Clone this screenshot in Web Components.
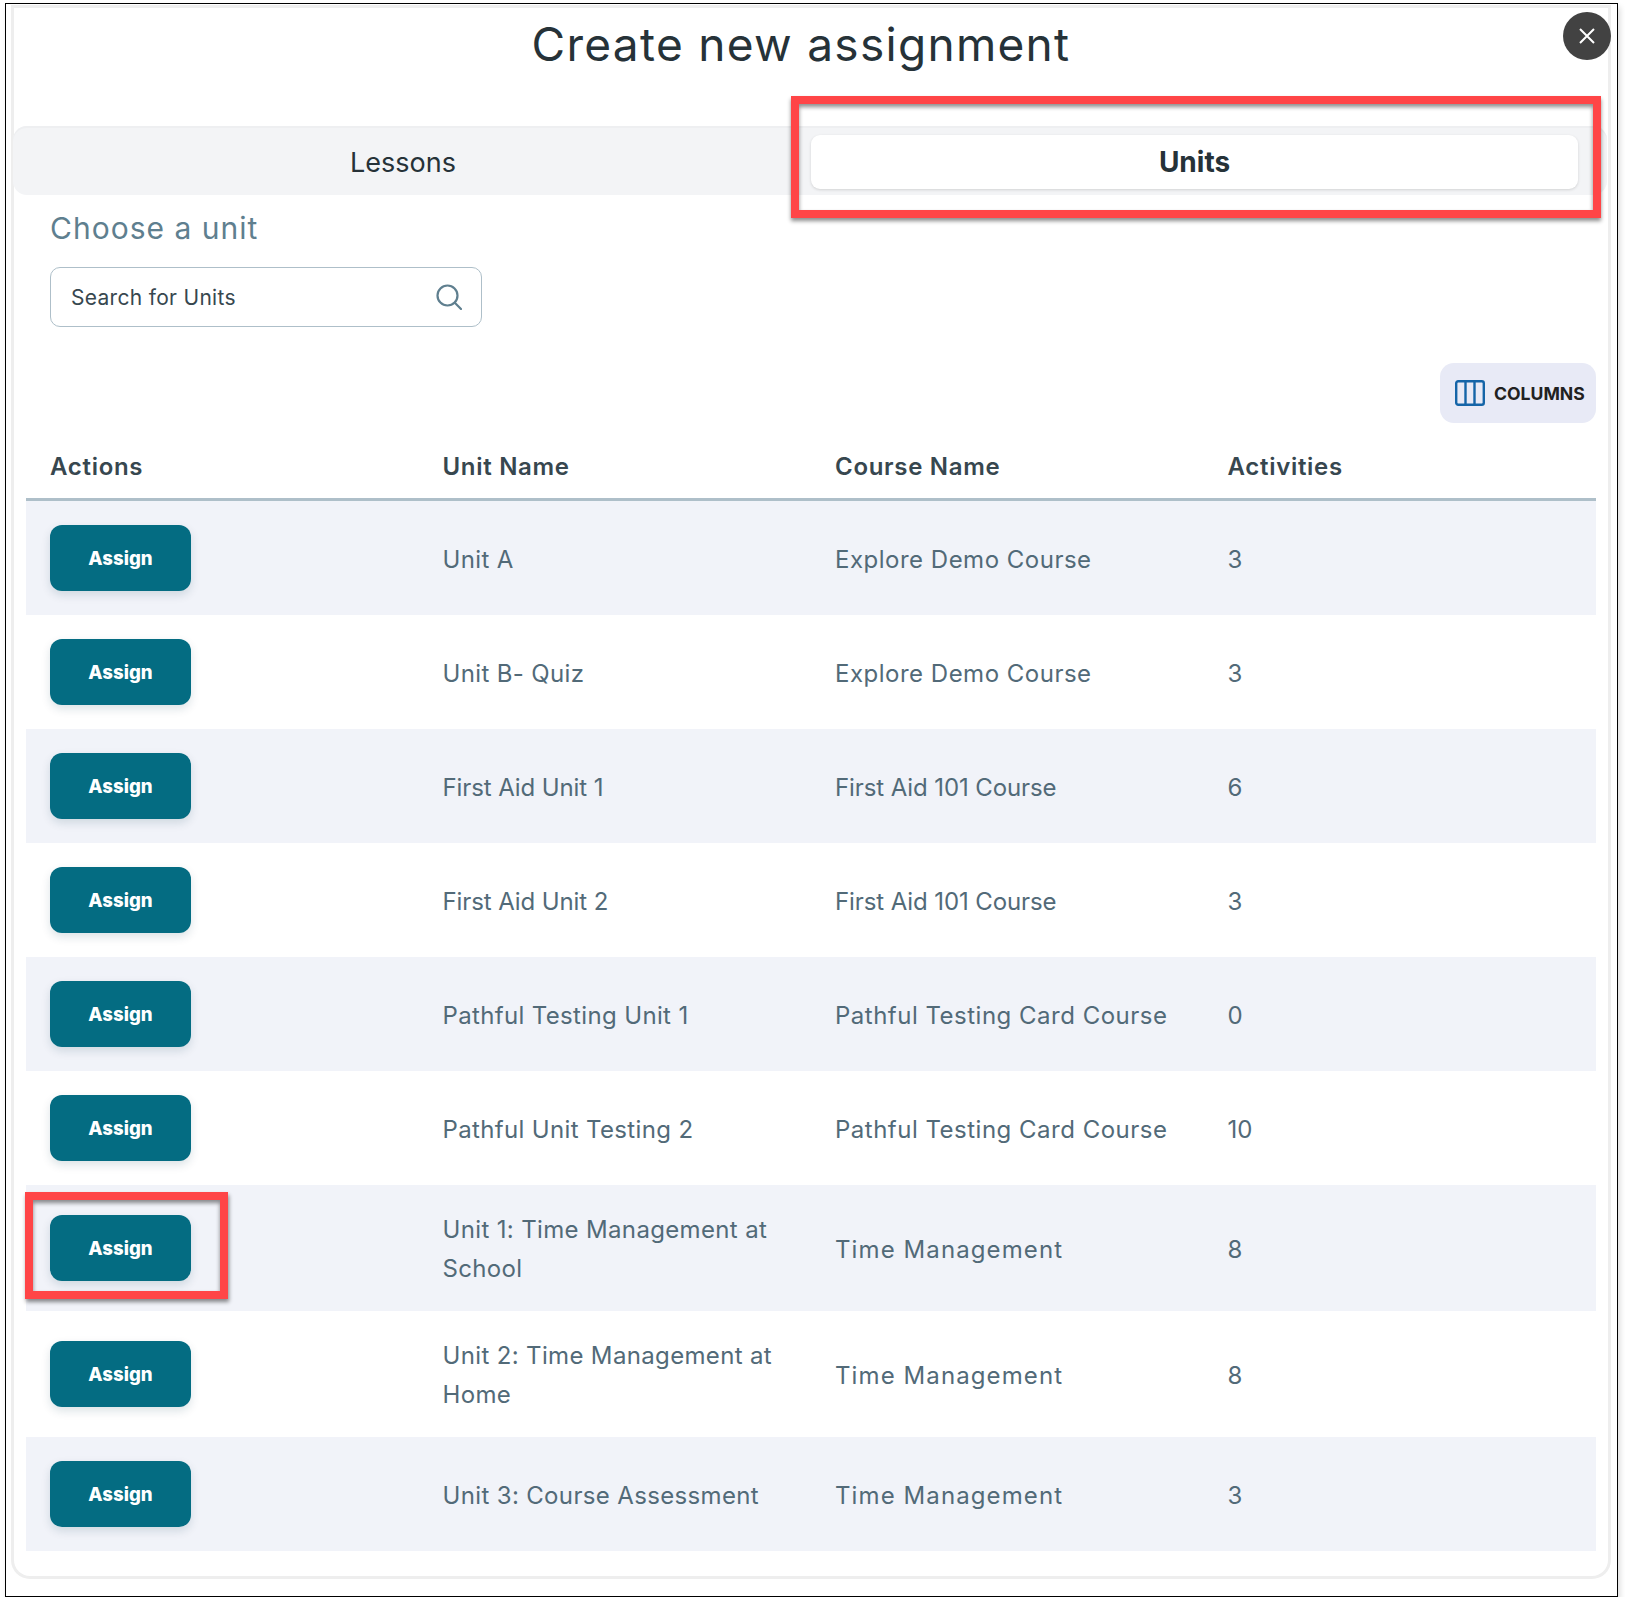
<!DOCTYPE html>
<html>
<head>
<meta charset="utf-8">
<title>Create new assignment</title>
<style>
	html, body { margin: 0; background: #fff; }
	body { font-family: Inter, "Open Sans", sans-serif; color: #263238; }
	.first-aid { --unit-track: -0.1px; --course-track: -0.1px; }
	.time-mgmt { --course-track: 1.1px; }
</style>
</head>
<body>
<assign-modal>
	<span slot="title">Create new assignment</span>
	<modal-tabs slot="tabs"></modal-tabs>
	<span slot="subtitle">Choose a unit</span>
	<search-box slot="search" placeholder="Search for Units"></search-box>
	<columns-button slot="tools"></columns-button>
	<unit-table slot="table">
		<unit-row unit="Unit A" course="Explore Demo Course" count="3"></unit-row>
		<unit-row unit="Unit B- Quiz" course="Explore Demo Course" count="3"></unit-row>
		<unit-row class="first-aid" unit="First Aid Unit 1" course="First Aid 101 Course" count="6"></unit-row>
		<unit-row class="first-aid" unit="First Aid Unit 2" course="First Aid 101 Course" count="3"></unit-row>
		<unit-row unit="Pathful Testing Unit 1" course="Pathful Testing Card Course" count="0"></unit-row>
		<unit-row unit="Pathful Unit Testing 2" course="Pathful Testing Card Course" count="10"></unit-row>
		<unit-row class="time-mgmt" unit="Unit 1: Time Management at School" course="Time Management" count="8" marked></unit-row>
		<unit-row class="time-mgmt" unit="Unit 2: Time Management at Home" course="Time Management" count="8"></unit-row>
		<unit-row class="time-mgmt" unit="Unit 3: Course Assessment" course="Time Management" count="3"></unit-row>
	</unit-table>
</assign-modal>

<script>
class AssignModal extends HTMLElement {
	constructor() {
		super();
		this.attachShadow({ mode: "open" });
		this.shadowRoot.innerHTML = `
			<style>
				:host {
					display: block;
					box-sizing: border-box;
					width: 1613px;
					height: 1594px;
					margin: 3px 0 0 5px;
					padding: 4px 9px 0 8px;
					border: 1px solid #000;
					box-shadow: 2px 4px 6px rgba(0, 0, 0, 0.14);
				}
				.modal {
					position: relative;
					box-sizing: border-box;
					height: 1568px;
					border-radius: 0 0 16px 16px;
					background: #fff;
					box-shadow: 0 0 0 3px #eeeeee;
				}
				h1 {
					height: 118px;
					margin: 0;
					padding-right: 20px;
					box-sizing: border-box;
					font-size: 46px;
					line-height: 72px;
					font-weight: 400;
					letter-spacing: 1.3px;
					text-align: center;
					color: #263238;
				}
				.close {
					position: absolute;
					top: 4px;
					right: -3px;
					display: flex;
					align-items: center;
					justify-content: center;
					width: 48px;
					height: 48px;
					border-radius: 50%;
					background: #424242;
				}
				.tabs { display: block; margin-left: -1px; }
				h2 {
					height: 72px;
					margin: 0;
					padding-left: 36px;
					box-sizing: border-box;
					font-size: 30px;
					line-height: 66px;
					font-weight: 400;
					letter-spacing: 1px;
					color: #5f7f8f;
				}
				.search { padding-left: 36px; }
				.tools {
					display: flex;
					justify-content: flex-end;
					margin-top: 36px;
					padding-right: 12px;
				}
				.table { padding: 0 12px; }
			</style>
			<div class="modal">
				<h1><slot name="title"></slot></h1>
				<div class="close">
					<svg width="16" height="16" viewBox="0 0 16 16"><path d="M1 1L15 15M15 1L1 15" stroke="#fff" stroke-width="2" fill="none"/></svg>
				</div>
				<div class="tabs"><slot name="tabs"></slot></div>
				<h2><slot name="subtitle"></slot></h2>
				<div class="search"><slot name="search"></slot></div>
				<div class="tools"><slot name="tools"></slot></div>
				<div class="table"><slot name="table"></slot></div>
			</div>
		`;
	}
}

class ModalTabs extends HTMLElement {
	constructor() {
		super();
		this.attachShadow({ mode: "open" });
		this.shadowRoot.innerHTML = `
			<style>
				:host {
					display: grid;
					grid-template-columns: 1fr 767px;
					box-sizing: border-box;
					width: 1594px;
					height: 69px;
					padding: 9px 29px 6px 0;
					border-radius: 14px;
					background: #f3f4f6;
					box-shadow: inset 0 2px 0 #eeeff1;
				}
				.tab {
					display: flex;
					align-items: center;
					justify-content: center;
					padding-right: 18px;
					font-size: 27px;
					color: #263238;
				}
				.tab.on {
					position: relative;
					padding-right: 0;
					border-radius: 9px;
					background: #fff;
					font-size: 28px;
					font-weight: 700;
					box-shadow: 0 1px 3px rgba(0, 0, 0, 0.14);
				}
				.mark {
					position: absolute;
					top: -39px;
					bottom: -29px;
					left: -20px;
					right: -23px;
					border: 8px solid #ff4547;
					box-shadow: 0 3px 4px rgba(0, 0, 0, 0.45), inset 0 3px 4px rgba(0, 0, 0, 0.45);
				}
			</style>
			<div class="tab">Lessons</div>
			<div class="tab on">Units<div class="mark"></div></div>
		`;
	}
}

class SearchBox extends HTMLElement {
	constructor() {
		super();
		this.attachShadow({ mode: "open" });
	}

	connectedCallback() {
		this.shadowRoot.innerHTML = `
			<style>
				:host {
					display: flex;
					align-items: center;
					justify-content: space-between;
					box-sizing: border-box;
					width: 432px;
					height: 60px;
					padding: 0 19px 0 20px;
					border: 1px solid #aebfc9;
					border-radius: 10px;
					font-size: 21px;
					letter-spacing: 0.3px;
					color: #37474f;
				}
			</style>
			<span>${this.getAttribute("placeholder")}</span>
			<svg width="26" height="26" viewBox="0 0 26 26" fill="none" stroke="#5f7f8f" stroke-width="2.2">
				<circle cx="11.5" cy="11.5" r="10"/>
				<path d="M18.8 18.8L25 25" stroke-linecap="round"/>
			</svg>
		`;
	}
}

class ColumnsButton extends HTMLElement {
	constructor() {
		super();
		this.attachShadow({ mode: "open" });
		this.shadowRoot.innerHTML = `
			<style>
				:host {
					display: inline-flex;
					align-items: center;
					box-sizing: border-box;
					width: 156px;
					height: 60px;
					padding-left: 15px;
					gap: 9px;
					border-radius: 14px;
					background: #e8eaf6;
					font-size: 17.6px;
					font-weight: 700;
					color: #212121;
				}
			</style>
			<svg width="30" height="26" viewBox="0 0 30 26" fill="none" stroke="#1565a8" stroke-width="2.4">
				<rect x="1.2" y="1.2" width="27.6" height="23.6" rx="2"/>
				<path d="M10.5 1V25M19.5 1V25"/>
			</svg>
			<span>COLUMNS</span>
		`;
	}
}

class UnitTable extends HTMLElement {
	constructor() {
		super();
		this.attachShadow({ mode: "open" });
		this.shadowRoot.innerHTML = `
			<style>
				:host { display: block; }
				.head {
					display: grid;
					grid-template-columns: repeat(4, 1fr);
					align-items: center;
					height: 78px;
					box-sizing: border-box;
					border-bottom: 3px solid #aebfc9;
					font-size: 24px;
					font-weight: 600;
					letter-spacing: 0.7px;
					color: #37474f;
				}
				.head div { padding: 12px 24px 0; }
				::slotted(unit-row:nth-child(odd)) { background: #f1f3f9; }
			</style>
			<div class="head">
				<div>Actions</div>
				<div>Unit Name</div>
				<div>Course Name</div>
				<div>Activities</div>
			</div>
			<slot></slot>
		`;
	}
}

class UnitRow extends HTMLElement {
	constructor() {
		super();
		this.attachShadow({ mode: "open" });
	}

	connectedCallback() {
		this.shadowRoot.innerHTML = `
			<style>
				:host {
					display: grid;
					grid-template-columns: repeat(4, 1fr);
					align-items: center;
					padding: 24px 0;
					font-size: 24px;
					line-height: 39px;
					color: #526a78;
				}
				.cell { padding: 0 24px; }
				.text { position: relative; top: 1px; }
				.unit { letter-spacing: var(--unit-track, 0.35px); }
				.course { letter-spacing: var(--course-track, 0.5px); }
			</style>
			<div class="cell"><assign-button ${this.hasAttribute("marked") ? "marked" : ""}></assign-button></div>
			<div class="cell text unit">${this.getAttribute("unit")}</div>
			<div class="cell text course">${this.getAttribute("course")}</div>
			<div class="cell text">${this.getAttribute("count")}</div>
		`;
	}
}

class AssignButton extends HTMLElement {
	constructor() {
		super();
		this.attachShadow({ mode: "open" });
	}

	connectedCallback() {
		this.shadowRoot.innerHTML = `
			<style>
				:host {
					position: relative;
					display: flex;
					align-items: center;
					justify-content: center;
					width: 141px;
					height: 66px;
					border-radius: 12px;
					background: #046c82;
					box-shadow: 0 4px 10px rgba(4, 60, 80, 0.14);
					font-size: 18.6px;
					font-weight: 800;
					color: #fff;
				}
				.mark {
					position: absolute;
					top: -23px;
					bottom: -18px;
					left: -25px;
					right: -37px;
					border: 8px solid #ff4547;
					box-shadow: 1px 3px 4px rgba(0, 0, 0, 0.45), inset 0 3px 4px rgba(0, 0, 0, 0.45);
				}
			</style>
			<span>Assign</span>
			${this.hasAttribute("marked") ? '<div class="mark"></div>' : ""}
		`;
	}
}

customElements.define("assign-modal", AssignModal);
customElements.define("modal-tabs", ModalTabs);
customElements.define("search-box", SearchBox);
customElements.define("columns-button", ColumnsButton);
customElements.define("unit-table", UnitTable);
customElements.define("unit-row", UnitRow);
customElements.define("assign-button", AssignButton);
</script>
</body>
</html>
